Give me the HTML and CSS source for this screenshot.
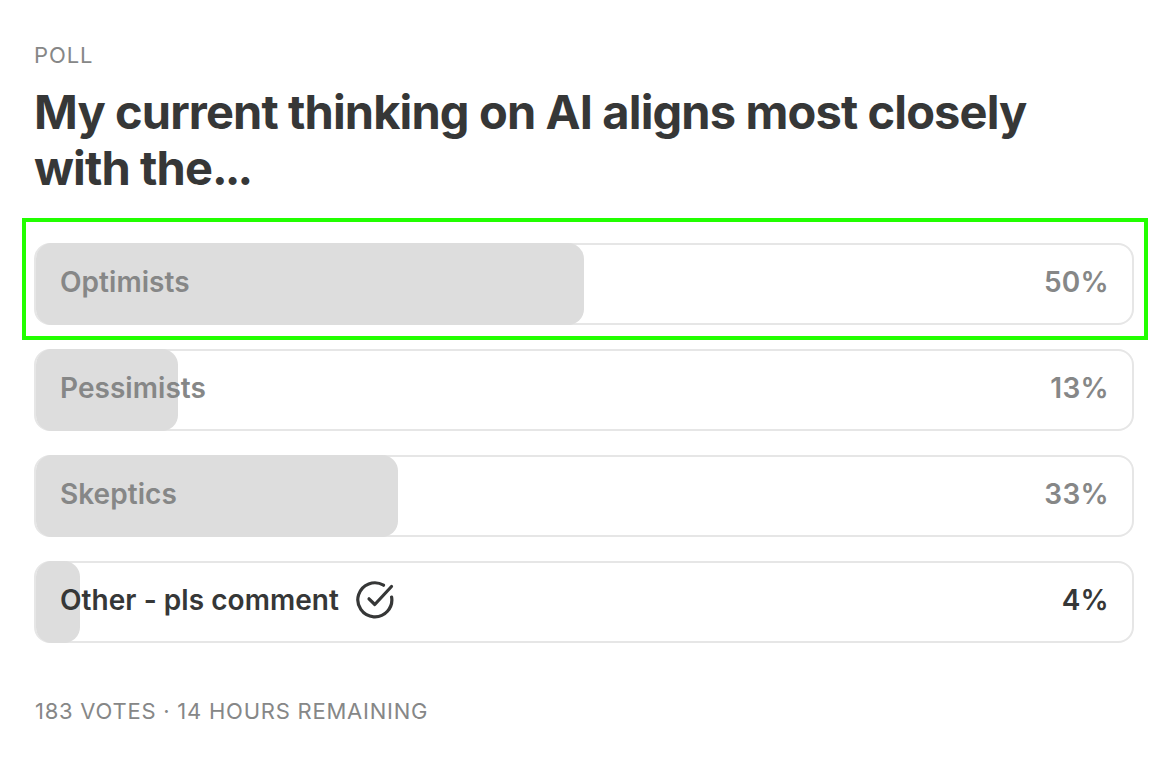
FILE: index.html
```html
<!DOCTYPE html>
<html lang="en">
<head>
  <meta charset="UTF-8" />
  <meta name="viewport" content="width=device-width, initial-scale=1.0" />
  <title>Poll</title>
  <link rel="stylesheet" href="styles.css">
</head>
<body>
  <div class="poll">
    <div class="label">POLL</div>
    <h1 class="title">My current thinking on AI aligns most closely with the<span class="dots">...</span></h1>
    <div class="options">
      <div class="option highlighted">
        <div class="bar" style="width: 50%"></div>
        <span class="name">Optimists</span>
        <span class="percent">50%</span>
      </div>
      <div class="option">
        <div class="bar" style="width: 13%"></div>
        <span class="name">Pessimists</span>
        <span class="percent">13%</span>
      </div>
      <div class="option">
        <div class="bar" style="width: 33%"></div>
        <span class="name">Skeptics</span>
        <span class="percent">33%</span>
      </div>
      <div class="option voted">
        <div class="bar" style="width: 4%"></div>
        <span class="name">Other - pls comment</span>
        <svg class="check" viewBox="0 0 40 40">
          <path d="M36.6 17A17 17 0 1 1 28.5 5.2" />
          <path d="M14 18.8l5.8 5.7L36.5 6.5" />
        </svg>
        <span class="percent">4%</span>
      </div>
    </div>
    <div class="status">183 VOTES · 14 HOURS REMAINING</div>
  </div>
</body>
</html>
```
FILE: styles.css
```css
body {
  margin: 0;
  background: white;
  font-family: Inter, "Liberation Sans", sans-serif;
  color: #363737;
}

.poll {
  padding: 41px 40px 0 34px;
}

.label,
.status {
  font-size: 22px;
  line-height: 28px;
  letter-spacing: 0.9px;
  color: #868787;
}

.title {
  max-width: 1040px;
  margin: 15px 0 0;
  font-size: 47px;
  line-height: 56px;
  font-weight: 700;
  letter-spacing: -0.87px;
}
.dots {
  letter-spacing: -3px;
}

.options {
  display: flex;
  flex-direction: column;
  gap: 24px;
  margin-top: 47px;
}

.option {
  position: relative;
  display: flex;
  align-items: center;
  height: 82px;
  padding: 0 23px 0 24px;
  box-sizing: border-box;
  border: 2px solid #e6e6e6;
  border-radius: 16px;
  font-size: 28px;
  font-weight: 600;
  letter-spacing: 0.05px;
  color: #868787;
}

.bar {
  position: absolute;
  top: -2px;
  bottom: -2px;
  left: 0;
  border-radius: 16px;
  background: #dddddd;
}

.name,
.percent {
  position: relative;
  line-height: 40px;
  padding-bottom: 4px;
}
.percent {
  margin-left: auto;
  letter-spacing: 0.3px;
}
.voted {
  color: #363737;
}

.highlighted::after {
  content: "";
  position: absolute;
  inset: -27px -16px -17px -14px;
  border: 4px solid #22ff00;
}

.check {
  width: 40px;
  height: 40px;
  margin: 0 0 4px 16px;
  fill: none;
  stroke: currentColor;
  stroke-width: 3.2;
  stroke-linecap: round;
  stroke-linejoin: round;
}

.status {
  margin-top: 54px;
  padding-left: 1px;
  letter-spacing: 0.76px;
}
```
